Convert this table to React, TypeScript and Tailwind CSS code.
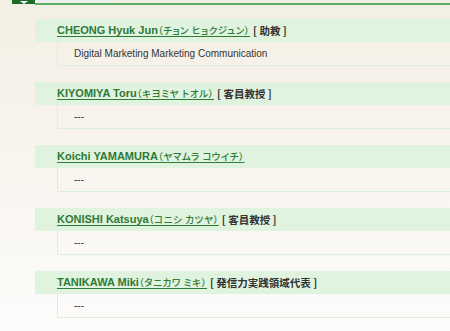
type Member = {
  name: string;
  kana: string;
  role?: string;
  field: string;
};

const members: Member[] = [
  { name: "CHEONG Hyuk Jun", kana: "（チョン ヒョクジュン）", role: "助教", field: "Digital Marketing Marketing Communication" },
  { name: "KIYOMIYA Toru", kana: "（キヨミヤ トオル）", role: "客員教授", field: "---" },
  { name: "Koichi YAMAMURA", kana: "（ヤマムラ コウイチ）", field: "---" },
  { name: "KONISHI Katsuya", kana: "（コニシ カツヤ）", role: "客員教授", field: "---" },
  { name: "TANIKAWA Miki", kana: "（タニカワ ミキ）", role: "発信力実践領域代表", field: "---" },
];

const latin = "font-['Liberation_Sans','Noto_Sans_CJK_JP',sans-serif]";
const cjk = "font-['Noto_Sans_CJK_JP',sans-serif]";

function MemberBlock({ member }: { member: Member }) {
  return (
    <div className="flex flex-col">
      <div className="flex h-[23px] items-center bg-[#e0f3df] pl-[22px] font-bold">
        <a href="#" className="text-[11px] text-[#2e7a36] underline decoration-1 underline-offset-[2px]">
          {member.name}
          <span className={`${cjk} text-[9.5px] font-medium tracking-[0.6px] [font-feature-settings:'palt']`}>{member.kana}</span>
        </a>
        {member.role && (
          <span className={`${cjk} ml-[3px] text-[10.5px] font-bold text-[#333]`}>[ {member.role} ]</span>
        )}
      </div>
      <div className="ml-[22px] flex h-[24px] items-center border-b border-l border-[#dcefdc] pl-4 text-[10px] text-[#333]">
        {member.field}
      </div>
    </div>
  );
}

export default function App() {
  return (
    <div className={`flex min-h-[331px] w-[450px] flex-col gap-4 overflow-hidden bg-gradient-to-b from-[#f4efe4] to-[#fdfcfb] ${latin}`}>
      <div className="-mb-[3px] flex h-[6px] pl-[12px]">
        <div className="flex h-[4px] w-[23px] items-end justify-center bg-[#1f6b2a]">
          <svg width="8" height="3" viewBox="0 0 8 3">
            <path d="M0 0 H8 L4 3 Z" fill="#fff" />
          </svg>
        </div>
        <div className="flex flex-1 flex-col">
          <div className="h-[3px] w-[74px] bg-[#eef0ee]" />
          <div className="h-[1.5px] bg-[#5fae68]" />
        </div>
      </div>
      <div className="flex flex-col gap-4 pl-[35px]">
        {members.map((m) => (
          <MemberBlock key={m.name} member={m} />
        ))}
      </div>
    </div>
  );
}
